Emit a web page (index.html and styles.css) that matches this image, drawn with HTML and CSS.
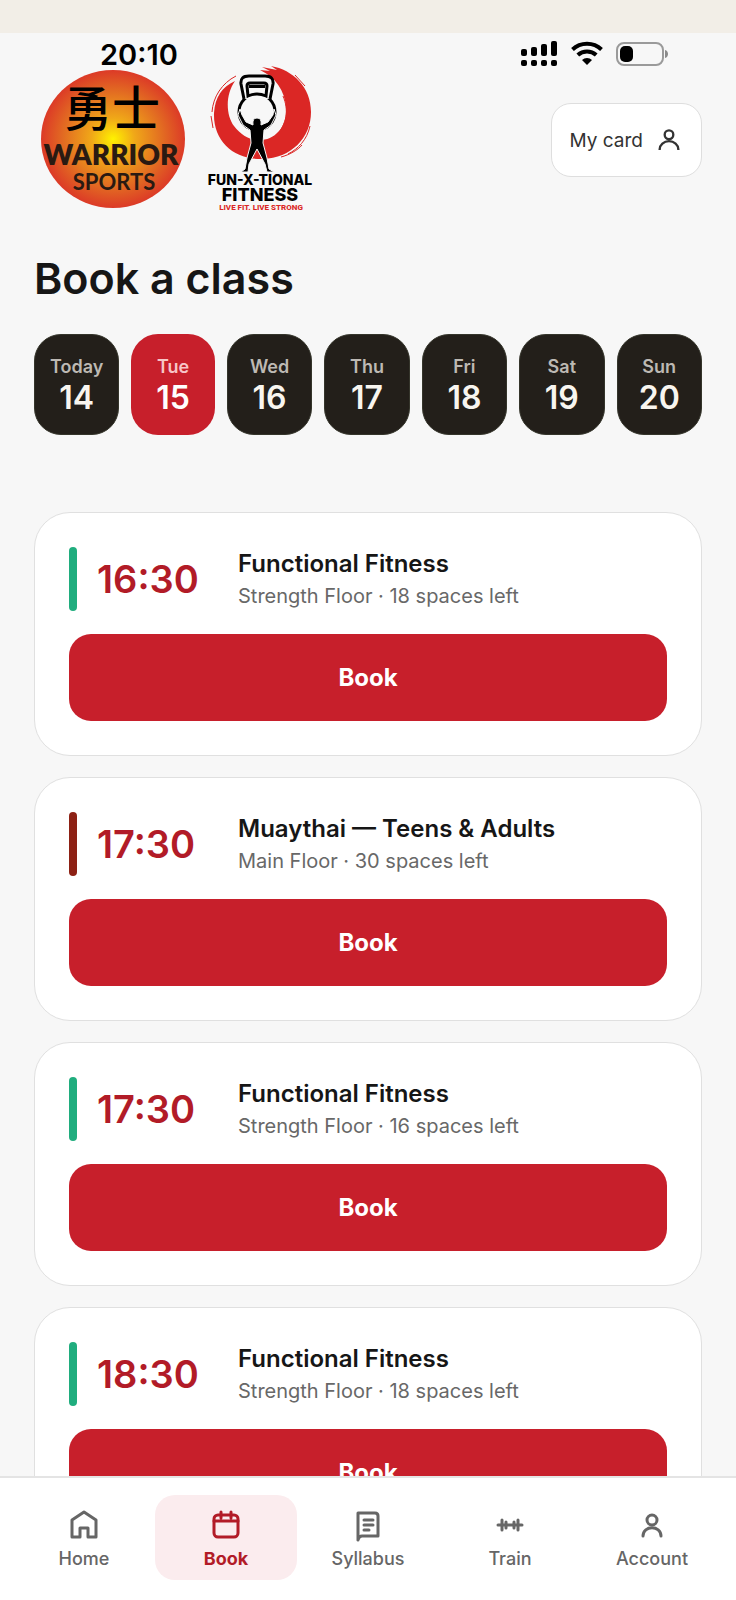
FILE: index.html
```
<!DOCTYPE html>
<html lang="en">
<head>
  <meta charset="UTF-8" />
  <meta name="viewport" content="width=device-width, initial-scale=1.0" />
  <title>Book a class</title>
  <link rel="stylesheet" href="styles.css">
</head>
<body>
  <div class="app">
    <div class="strip"></div>

    <div class="statusbar">
      <span class="clock">20:10</span>
      <div class="status-icons">
        <svg width="37" height="26" viewBox="0 0 37 26" aria-hidden="true">
          <rect x="0" y="8" width="6" height="7" rx="2" />
          <rect x="10" y="6" width="6" height="9" rx="2" />
          <rect x="20" y="3" width="6" height="12" rx="2" />
          <rect x="30" y="0" width="6" height="15" rx="2" />
          <rect x="0" y="19" width="6" height="6" rx="2" />
          <rect x="10" y="19" width="6" height="6" rx="2" />
          <rect x="20" y="19" width="6" height="6" rx="2" />
          <rect x="30" y="19" width="6" height="6" rx="2" />
        </svg>
        <svg width="32" height="26" viewBox="0 0 32 26" fill="none" stroke="#000" stroke-width="4" aria-hidden="true">
          <path d="M1.500 8.500a21 21 0 0 1 29 0" />
          <path d="M6.800 14a13.500 13.500 0 0 1 18.400 0" />
          <path d="M11 19a7.500 7.500 0 0 1 10 0L16 24z" fill="#000" stroke="none" />
        </svg>
        <svg width="52" height="26" viewBox="0 0 52 26" aria-hidden="true">
          <rect x="1" y="2" width="46" height="22" rx="7" fill="none" stroke="#9a9a9a" stroke-width="2" />
          <rect x="4" y="5" width="13" height="16" rx="5" />
          <path d="M49 9c4 1 4 7 0 8z" fill="#8a8a8a" />
        </svg>
      </div>
    </div>

    <header class="header">
      <div class="logos">
        <svg class="logo" width="144" height="148" viewBox="0 0 144 148" role="img" aria-label="Warrior Sports">
          <defs>
            <radialGradient id="sun">
              <stop offset="0" stop-color="#fff200" />
              <stop offset="0.300" stop-color="#f0a818" />
              <stop offset="0.700" stop-color="#e26a22" />
              <stop offset="1" stop-color="#dc3a27" />
            </radialGradient>
          </defs>
          <ellipse cx="72" cy="73" rx="72" ry="69" fill="url(#sun)" />
          <text class="kanji" x="71" y="60">勇士</text>
          <text class="warrior" x="70" y="99">WARRIOR</text>
          <text class="sports" x="73" y="124">SPORTS</text>
        </svg>
        <svg class="logo" width="112" height="148" viewBox="0 0 112 148" role="img" aria-label="Fun-X-Tional Fitness">
          <path fill="#db2725" d="M55 4L65 5L57 1L72 4L66 0C88 4 106 21 106 46C106 72 86 92 58 93C30 94 8 76 9 47C10 31 17 21 30 15C20 29 21 49 29 60C37 70 46 75 57 74C73 72 82 58 81 42C80 24 70 11 55 4Z" />
          <path d="M31 10C17 17 8 31 7 46M6 50L8 62M76 91C84 89 93 84 97 79M83 88C93 83 102 74 105 60M78 30C84 44 82 58 71 70M27 62C34 72 42 77 52 78M90 9L100 20" fill="none" stroke="#db2725" />
          <circle cx="52" cy="46" r="18" fill="#f7f7f7" stroke="#000" stroke-width="3" />
          <path d="M39 33L36 18Q35 10 44 10H60Q69 10 68 18L65 33" fill="#f7f7f7" stroke="#000" stroke-width="3" />
          <path d="M43 30L42 20Q42 17 45 17H59Q62 17 62 20L61 30Q52 26 43 30Z" fill="#f7f7f7" stroke="#000" stroke-width="3" />
          <path d="M44 19H60L60 22H44Z" />
          <path d="M35 43L33 49L38 59L45 64L46 77L42 92L40 103L36 106H43L44 98L52 83L60 98L62 106H69L64 103L62 92L58 77L59 64L66 59L71 49L69 43L68 49L63 56L56 59Q57 52 52 52Q47 52 48 59L41 56L37 49Z" stroke="#f7f7f7" stroke-width="1" />
          <text class="fun" x="55" y="119">FUN-X-TIONAL</text>
          <text class="fit" x="55" y="135">FITNESS</text>
          <text class="live" x="56" y="144">LIVE FIT. LIVE STRONG</text>
        </svg>
      </div>
      <button class="my-card">
        My card
        <svg width="28" height="28" viewBox="0 0 24 24" aria-hidden="true">
          <circle cx="12" cy="7.500" r="3.700" />
          <path d="M4 20.500v-.500a8 7 0 0 1 16 0v.500" />
        </svg>
      </button>
    </header>

    <main class="main">
      <h1>Book a class</h1>

      <div class="days">
        <button class="day"><span>Today</span><strong>14</strong></button>
        <button class="day active"><span>Tue</span><strong>15</strong></button>
        <button class="day"><span>Wed</span><strong>16</strong></button>
        <button class="day"><span>Thu</span><strong>17</strong></button>
        <button class="day"><span>Fri</span><strong>18</strong></button>
        <button class="day"><span>Sat</span><strong>19</strong></button>
        <button class="day"><span>Sun</span><strong>20</strong></button>
      </div>

      <div class="classes">
        <article class="card">
          <div class="card-top">
            <div class="bar green"></div>
            <time class="time">16:30</time>
            <div class="info">
              <h2>Functional Fitness</h2>
              <p>Strength Floor · 18 spaces left</p>
            </div>
          </div>
          <button class="book">Book</button>
        </article>

        <article class="card">
          <div class="card-top">
            <div class="bar maroon"></div>
            <time class="time">17:30</time>
            <div class="info">
              <h2>Muaythai — Teens &amp; Adults</h2>
              <p>Main Floor · 30 spaces left</p>
            </div>
          </div>
          <button class="book">Book</button>
        </article>

        <article class="card">
          <div class="card-top">
            <div class="bar green"></div>
            <time class="time">17:30</time>
            <div class="info">
              <h2>Functional Fitness</h2>
              <p>Strength Floor · 16 spaces left</p>
            </div>
          </div>
          <button class="book">Book</button>
        </article>

        <article class="card">
          <div class="card-top">
            <div class="bar green"></div>
            <time class="time">18:30</time>
            <div class="info">
              <h2>Functional Fitness</h2>
              <p>Strength Floor · 18 spaces left</p>
            </div>
          </div>
          <button class="book">Book</button>
        </article>
      </div>
    </main>

    <nav class="nav">
      <a href="#home">
        <svg width="32" height="32" viewBox="0 0 32 32" aria-hidden="true">
          <path d="M4 13L16 5L28 13V30H20V21H12V30H4Z" />
        </svg>
        Home
      </a>
      <a href="#book" class="active">
        <svg width="32" height="32" viewBox="0 0 32 32" aria-hidden="true">
          <rect x="4" y="8" width="24" height="22" rx="4" />
          <path d="M4 14H28M11 5V11M21 5V11" />
        </svg>
        Book
      </a>
      <a href="#syllabus">
        <svg width="32" height="32" viewBox="0 0 32 32" aria-hidden="true">
          <path d="M6 33V6H23Q26 6 26 9V29H10Q7 29 6 33M12 13H21M12 18H21M12 23H17" />
        </svg>
        Syllabus
      </a>
      <a href="#train">
        <svg width="32" height="32" viewBox="0 0 32 32" aria-hidden="true">
          <path d="M4 18H28M8 13V23M12 15V21M20 15V21M24 13V23" />
        </svg>
        Train
      </a>
      <a href="#account">
        <svg width="32" height="32" viewBox="0 0 32 32" aria-hidden="true">
          <circle cx="16" cy="13" r="5" />
          <path d="M7 29C7 18 25 18 25 29" />
        </svg>
        Account
      </a>
    </nav>
  </div>
</body>
</html>
```
FILE: styles.css
```
* { box-sizing: border-box; }
body { margin: 0; background: #f7f7f7; color: #161616; font-family: Inter, "Liberation Sans", sans-serif; }
h1, h2, p { margin: 0; }
button { font-family: inherit; cursor: pointer; }
.app { display: flex; flex-direction: column; height: 100vh; overflow: hidden; }

.strip { flex: none; height: 33px; background: #f2eee7; }
.statusbar { flex: none; display: flex; justify-content: space-between; height: 33px; padding: 6px 68px 0 100px; }
.clock { font-size: 29px; line-height: 32px; font-weight: 600; color: #000; }
.status-icons { display: flex; gap: 13px; padding-top: 2px; }

.header { flex: none; display: flex; justify-content: space-between; align-items: center; height: 148px; padding: 0 34px 0 41px; }
.logos { display: flex; gap: 20px; }
.logo { display: block; overflow: visible; }
.logo text { text-anchor: middle; }
.kanji { font: 500 48px "Noto Sans CJK SC", sans-serif; }
.warrior { font: 800 28px Lato, sans-serif; fill: #2a1a12; }
.sports { font: 700 22px Lato, sans-serif; fill: #2a1a12; }
.fun { font: 800 14px Inter, sans-serif; }
.fit { font: 800 18px Inter, sans-serif; }
.live { font: 800 8px Roboto, sans-serif; fill: #db2725; }
.my-card { display: flex; align-items: center; gap: 12px; height: 74px; padding: 0 18px; background: #fff; border: 1px solid #dedede; border-radius: 20px; font-size: 19px; color: #333; }
.my-card svg { fill: none; stroke: #333; stroke-width: 2; }

.main { flex: 1; min-height: 0; overflow-y: auto; scrollbar-width: none; padding: 32px 34px 34px; }
h1 { font-size: 43px; line-height: 64px; font-weight: 600; }

.days { display: flex; gap: 12px; margin: 24px 0 77px; }
.day { box-sizing: content-box; flex: 1; display: flex; flex-direction: column; align-items: center; justify-content: center; height: 99px; padding: 0; background: #231f1a; color: #f8f5ef; border: 1px solid #35352b; border-radius: 27px; }
.day span { font-size: 18px; line-height: 26px; font-weight: 600; color: #bdb9b3; }
.day strong { font-size: 32px; line-height: 36px; font-weight: 600; }
.day.active { height: 101px; background: #c71f2b; border: none; color: #fff; }
.day.active span { color: #f7c5c8; }

.classes { display: flex; flex-direction: column; gap: 21px; }
.card { padding: 34px; background: #fff; border: 1px solid #e0e0e0; border-radius: 36px; }
.card-top { display: flex; align-items: center; margin-bottom: 23px; }
.bar { width: 8px; height: 64px; margin-right: 20px; border-radius: 4px; }
.green { background: #20ad7e; }
.maroon { background: #8d2114; }
.time { flex: none; width: 141px; font-size: 38px; line-height: 48px; font-weight: 600; color: #b21b27; }
.info h2 { font-size: 24px; line-height: 34px; font-weight: 600; }
.info p { font-size: 20px; line-height: 30px; color: #686868; }
.book { display: block; width: 100%; height: 87px; background: #c71f2b; color: #fff; border: none; border-radius: 22px; font-size: 24px; font-weight: 700; }

.nav { flex: none; display: flex; padding: 17px 13px 20px; background: #fff; border-top: 2px solid #e4e4e4; }
.nav a { flex: 1; display: flex; flex-direction: column; align-items: center; height: 85px; padding-top: 12px; border-radius: 20px; color: #666; font-size: 18px; line-height: 40px; font-weight: 500; text-decoration: none; }
.nav svg { flex: none; overflow: visible; fill: none; stroke: currentColor; stroke-width: 3; stroke-linejoin: round; stroke-linecap: round; }
.nav .active { background: #fbecee; color: #b21b27; font-weight: 700; }
```
